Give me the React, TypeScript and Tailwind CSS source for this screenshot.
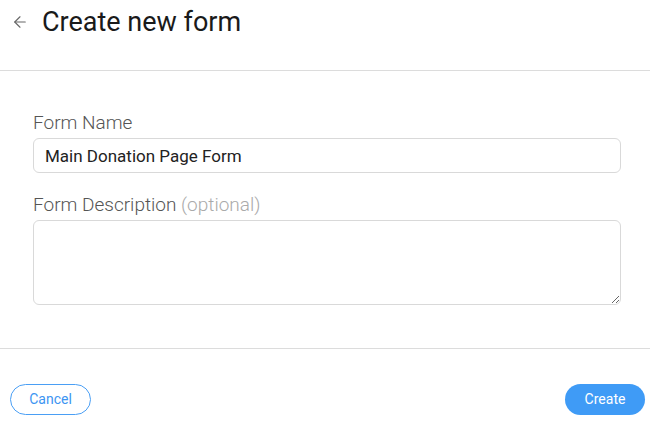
import { ArrowLeft } from "lucide-react";

export default function App() {
  return (
    <div className="w-[650px] h-[429px] bg-white font-['Roboto',sans-serif] overflow-hidden">
      <header className="flex items-center h-[71px] border-b border-[#dcdcdc] pb-[26px] pl-[11px]">
        <ArrowLeft className="h-[18px] w-[18px] text-[#666]" strokeWidth={1.5} />
        <h1 className="ml-[13px] text-[27px] leading-none text-[#1a1a1a]">Create new form</h1>
      </header>

      <main className="px-[33px] pt-[40px] pb-[43px] border-b border-[#dcdcdc] w-[650px]">
        <label className="block text-[19px] font-light text-[#555] leading-[24px]">Form Name</label>
        <input
          defaultValue="Main Donation Page Form"
          className="mt-[3px] block w-[588px] h-[35px] rounded-[6px] border border-[#d9d9d9] px-[11px] text-[17px] text-[#222] outline-none"
        />
        <label className="block mt-[20px] text-[19px] font-light text-[#555] leading-[24px]">
          Form Description <span className="text-[#aaa]">(optional)</span>
        </label>
        <textarea className="mt-[3px] block w-[588px] h-[85px] rounded-[6px] border border-[#d9d9d9] px-[11px] py-[6px] text-[16px] outline-none" />
      </main>

      <footer className="flex items-center justify-between px-[10px] pt-[35px] pr-[5px]">
        <button className="h-[31px] w-[81px] rounded-full border border-[#4a9ff5] text-[#3d95f2] text-[14px]">Cancel</button>
        <button className="h-[31px] w-[80px] rounded-full bg-[#3f9bf6] text-white text-[14px]">Create</button>
      </footer>
    </div>
  );
}
